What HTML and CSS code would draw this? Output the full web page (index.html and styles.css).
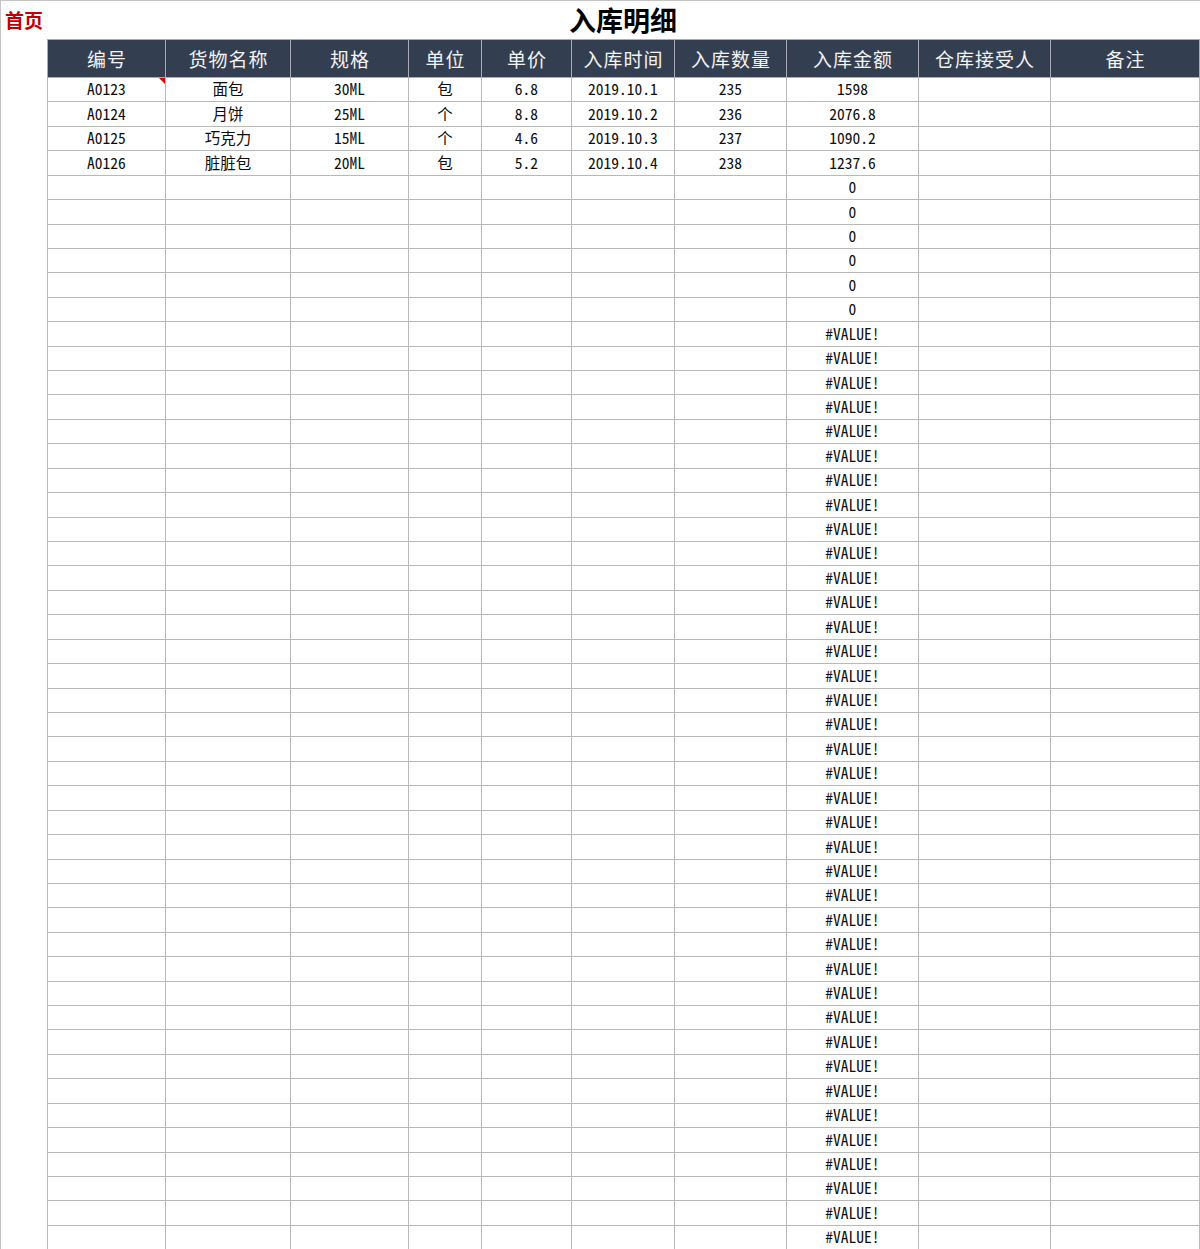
FILE: index.html
```html
<!DOCTYPE html>
<html lang="zh-CN">
<head>
<meta charset="utf-8">
<title>入库明细</title>
<link rel="stylesheet" href="styles.css">
</head>
<body>
<div class="sheet">
  <div class="topbar">
    <a class="home" href="#">首页</a>
    <h1 class="title">入库明细</h1>
  </div>
  <div class="table-wrap">
    <table class="grid">
      <colgroup>
        <col class="c1"><col class="c2"><col class="c3"><col class="c4"><col class="c5">
        <col class="c6"><col class="c7"><col class="c8"><col class="c9"><col class="c10">
      </colgroup>
      <thead>
        <tr><th>编号</th><th>货物名称</th><th>规格</th><th>单位</th><th>单价</th><th>入库时间</th><th>入库数量</th><th>入库金额</th><th>仓库接受人</th><th>备注</th></tr>
      </thead>
      <tbody>
        <tr><td class="note">A0123</td><td>面包</td><td>30ML</td><td>包</td><td>6.8</td><td>2019.10.1</td><td>235</td><td>1598</td><td></td><td></td></tr>
        <tr><td>A0124</td><td>月饼</td><td>25ML</td><td>个</td><td>8.8</td><td>2019.10.2</td><td>236</td><td>2076.8</td><td></td><td></td></tr>
        <tr><td>A0125</td><td>巧克力</td><td>15ML</td><td>个</td><td>4.6</td><td>2019.10.3</td><td>237</td><td>1090.2</td><td></td><td></td></tr>
        <tr><td>A0126</td><td>脏脏包</td><td>20ML</td><td>包</td><td>5.2</td><td>2019.10.4</td><td>238</td><td>1237.6</td><td></td><td></td></tr>
        <tr><td></td><td></td><td></td><td></td><td></td><td></td><td></td><td>0</td><td></td><td></td></tr>
        <tr><td></td><td></td><td></td><td></td><td></td><td></td><td></td><td>0</td><td></td><td></td></tr>
        <tr><td></td><td></td><td></td><td></td><td></td><td></td><td></td><td>0</td><td></td><td></td></tr>
        <tr><td></td><td></td><td></td><td></td><td></td><td></td><td></td><td>0</td><td></td><td></td></tr>
        <tr><td></td><td></td><td></td><td></td><td></td><td></td><td></td><td>0</td><td></td><td></td></tr>
        <tr><td></td><td></td><td></td><td></td><td></td><td></td><td></td><td>0</td><td></td><td></td></tr>
        <tr><td></td><td></td><td></td><td></td><td></td><td></td><td></td><td>#VALUE!</td><td></td><td></td></tr>
        <tr><td></td><td></td><td></td><td></td><td></td><td></td><td></td><td>#VALUE!</td><td></td><td></td></tr>
        <tr><td></td><td></td><td></td><td></td><td></td><td></td><td></td><td>#VALUE!</td><td></td><td></td></tr>
        <tr><td></td><td></td><td></td><td></td><td></td><td></td><td></td><td>#VALUE!</td><td></td><td></td></tr>
        <tr><td></td><td></td><td></td><td></td><td></td><td></td><td></td><td>#VALUE!</td><td></td><td></td></tr>
        <tr><td></td><td></td><td></td><td></td><td></td><td></td><td></td><td>#VALUE!</td><td></td><td></td></tr>
        <tr><td></td><td></td><td></td><td></td><td></td><td></td><td></td><td>#VALUE!</td><td></td><td></td></tr>
        <tr><td></td><td></td><td></td><td></td><td></td><td></td><td></td><td>#VALUE!</td><td></td><td></td></tr>
        <tr><td></td><td></td><td></td><td></td><td></td><td></td><td></td><td>#VALUE!</td><td></td><td></td></tr>
        <tr><td></td><td></td><td></td><td></td><td></td><td></td><td></td><td>#VALUE!</td><td></td><td></td></tr>
        <tr><td></td><td></td><td></td><td></td><td></td><td></td><td></td><td>#VALUE!</td><td></td><td></td></tr>
        <tr><td></td><td></td><td></td><td></td><td></td><td></td><td></td><td>#VALUE!</td><td></td><td></td></tr>
        <tr><td></td><td></td><td></td><td></td><td></td><td></td><td></td><td>#VALUE!</td><td></td><td></td></tr>
        <tr><td></td><td></td><td></td><td></td><td></td><td></td><td></td><td>#VALUE!</td><td></td><td></td></tr>
        <tr><td></td><td></td><td></td><td></td><td></td><td></td><td></td><td>#VALUE!</td><td></td><td></td></tr>
        <tr><td></td><td></td><td></td><td></td><td></td><td></td><td></td><td>#VALUE!</td><td></td><td></td></tr>
        <tr><td></td><td></td><td></td><td></td><td></td><td></td><td></td><td>#VALUE!</td><td></td><td></td></tr>
        <tr><td></td><td></td><td></td><td></td><td></td><td></td><td></td><td>#VALUE!</td><td></td><td></td></tr>
        <tr><td></td><td></td><td></td><td></td><td></td><td></td><td></td><td>#VALUE!</td><td></td><td></td></tr>
        <tr><td></td><td></td><td></td><td></td><td></td><td></td><td></td><td>#VALUE!</td><td></td><td></td></tr>
        <tr><td></td><td></td><td></td><td></td><td></td><td></td><td></td><td>#VALUE!</td><td></td><td></td></tr>
        <tr><td></td><td></td><td></td><td></td><td></td><td></td><td></td><td>#VALUE!</td><td></td><td></td></tr>
        <tr><td></td><td></td><td></td><td></td><td></td><td></td><td></td><td>#VALUE!</td><td></td><td></td></tr>
        <tr><td></td><td></td><td></td><td></td><td></td><td></td><td></td><td>#VALUE!</td><td></td><td></td></tr>
        <tr><td></td><td></td><td></td><td></td><td></td><td></td><td></td><td>#VALUE!</td><td></td><td></td></tr>
        <tr><td></td><td></td><td></td><td></td><td></td><td></td><td></td><td>#VALUE!</td><td></td><td></td></tr>
        <tr><td></td><td></td><td></td><td></td><td></td><td></td><td></td><td>#VALUE!</td><td></td><td></td></tr>
        <tr><td></td><td></td><td></td><td></td><td></td><td></td><td></td><td>#VALUE!</td><td></td><td></td></tr>
        <tr><td></td><td></td><td></td><td></td><td></td><td></td><td></td><td>#VALUE!</td><td></td><td></td></tr>
        <tr><td></td><td></td><td></td><td></td><td></td><td></td><td></td><td>#VALUE!</td><td></td><td></td></tr>
        <tr><td></td><td></td><td></td><td></td><td></td><td></td><td></td><td>#VALUE!</td><td></td><td></td></tr>
        <tr><td></td><td></td><td></td><td></td><td></td><td></td><td></td><td>#VALUE!</td><td></td><td></td></tr>
        <tr><td></td><td></td><td></td><td></td><td></td><td></td><td></td><td>#VALUE!</td><td></td><td></td></tr>
        <tr><td></td><td></td><td></td><td></td><td></td><td></td><td></td><td>#VALUE!</td><td></td><td></td></tr>
        <tr><td></td><td></td><td></td><td></td><td></td><td></td><td></td><td>#VALUE!</td><td></td><td></td></tr>
        <tr><td></td><td></td><td></td><td></td><td></td><td></td><td></td><td>#VALUE!</td><td></td><td></td></tr>
        <tr><td></td><td></td><td></td><td></td><td></td><td></td><td></td><td>#VALUE!</td><td></td><td></td></tr>
        <tr><td></td><td></td><td></td><td></td><td></td><td></td><td></td><td>#VALUE!</td><td></td><td></td></tr>
      </tbody>
    </table>
  </div>
</div>
</body>
</html>
```
FILE: styles.css
```css
html, body {
  margin: 0;
  padding: 0;
  background: #ffffff;
}

.sheet {
  width: 1199px;
  height: 1248px;
  border-top: 1px solid #c4c4c4;
  border-left: 1px solid #c4c4c4;
  overflow: hidden;
  font-family: "Noto Sans CJK SC", "DejaVu Sans", sans-serif;
}

.topbar {
  display: grid;
  grid-template-columns: 46px 1152px;
  height: 38px;
  align-items: center;
}

.home {
  padding-left: 4px;
  font-size: 19px;
  font-weight: 700;
  color: #c00000;
  text-decoration: none;
  line-height: 1;
  margin-top: -2px;
}

.title {
  margin: 0;
  text-align: center;
  font-size: 27px;
  font-weight: 700;
  color: #000;
  line-height: 1;
  margin-top: -1px;
}

.table-wrap {
  padding-left: 46px;
}

.grid {
  table-layout: fixed;
  border-collapse: collapse;
  width: 1152px;
}

.c1 { width: 118px; }
.c2 { width: 125px; }
.c3 { width: 118px; }
.c4 { width: 73px; }
.c5 { width: 90px; }
.c6 { width: 103px; }
.c7 { width: 112px; }
.c8 { width: 132px; }
.c9 { width: 132px; }
.c10 { width: 149px; }

.grid th {
  height: 37px;
  padding: 0 0 0 1px;
  background: #333f50;
  color: #f2f2f2;
  font-weight: 400;
  font-size: 19px;
  letter-spacing: 1px;
  border: 1px solid #a9adb3;
  text-align: center;
  vertical-align: middle;
  line-height: 1;
}

.grid td {
  height: 22.43px;
  padding: 0 0 1px;
  border: 1px solid #b8b8b8;
  text-align: center;
  vertical-align: middle;
  font-family: "Noto Sans Mono CJK SC", "DejaVu Sans Mono", "Noto Sans CJK SC", monospace;
  font-size: 15.5px;
  line-height: 1;
  color: #0d0d0d;
  white-space: nowrap;
}

.grid td.note {
  position: relative;
}

.grid td.note::after {
  content: "";
  position: absolute;
  top: 0;
  right: 0;
  width: 0;
  height: 0;
  border-top: 6px solid #e00000;
  border-left: 6px solid transparent;
}
```
